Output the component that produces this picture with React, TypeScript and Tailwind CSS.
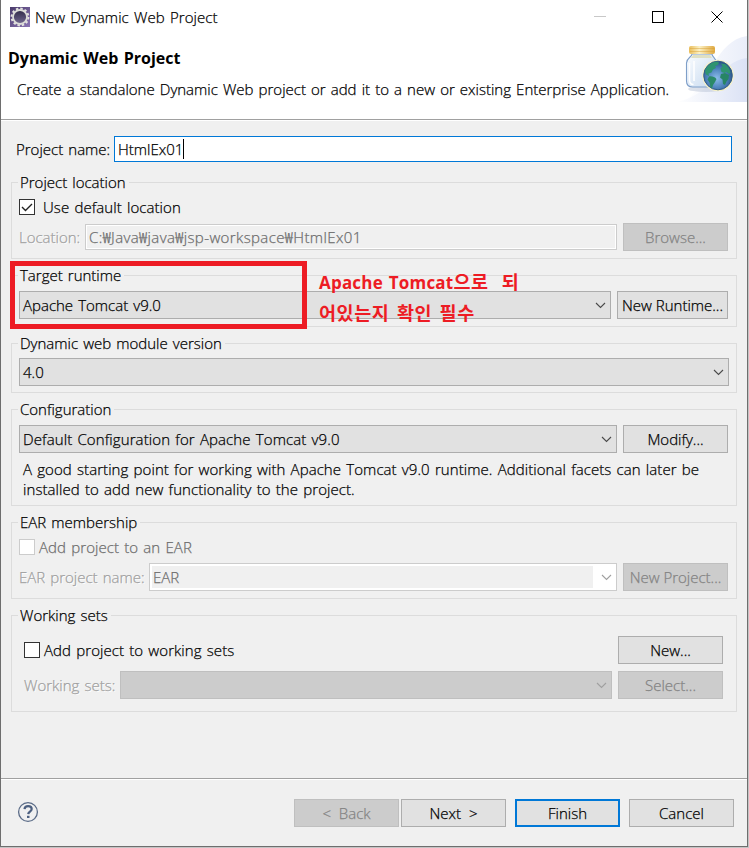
import type { ReactNode } from 'react';
import clsx from 'clsx';

/* --- Small building blocks --- */

function Chevron({ className = 'text-[#4a4a4a]' }: { className?: string }) {
  return (
    <svg width="11" height="7" viewBox="0 0 11 7" fill="none" className={clsx('shrink-0', className)}>
      <path d="M1 1l4.500 4.500L10 1" stroke="currentColor" strokeWidth="1.1" />
    </svg>
  );
}

function Group({ title, className, children }: { title: string; className?: string; children: ReactNode }) {
  return (
    <section className={clsx('ml-[10px] w-[726px] border border-[#dcdcdc]', className)}>
      <h2 className="-mt-[11px] ml-[6px] h-5 w-fit bg-[#f0f0f0] pl-[2px] pr-[3px] leading-5">{title}</h2>
      {children}
    </section>
  );
}

function Button({ children, disabled, primary, className = 'w-[105px]' }: { children: ReactNode; disabled?: boolean; primary?: boolean; className?: string }) {
  return (
    <button
      disabled={disabled}
      className={clsx(
        'flex h-7 shrink-0 items-center justify-center whitespace-pre',
        className,
        disabled && 'border border-[#bfbfbf] bg-[#cccccc] text-[#838383]',
        primary && 'border-2 border-[#0078d7] bg-[#e1e1e1]',
        !disabled && !primary && 'border border-[#adadad] bg-[#e1e1e1]',
      )}
    >
      {children}
    </button>
  );
}

function Combo({ children, disabled, className }: { children?: ReactNode; disabled?: boolean; className?: string }) {
  return (
    <div
      className={clsx(
        'flex h-7 shrink-0 items-center justify-between border pl-[3px] pr-[4px]',
        disabled ? 'border-[#bfbfbf] bg-[#cccccc]' : 'border-[#adadad] bg-[#e1e1e1]',
        className,
      )}
    >
      <span>{children}</span>
      <Chevron className={disabled ? 'text-[#a0a0a0]' : 'text-[#4a4a4a]'} />
    </div>
  );
}

function Checkbox({ checked, disabled }: { checked?: boolean; disabled?: boolean }) {
  return (
    <span className={clsx('flex size-4 shrink-0 items-center justify-center border bg-white', disabled ? 'border-[#cccccc]' : 'border-[#333333]')}>
      {checked && (
        <svg width="14" height="14" viewBox="0 0 14 14" fill="none">
          <path d="M2 7l3.500 3.500L12 4" stroke="#222" strokeWidth="1.4" />
        </svg>
      )}
    </span>
  );
}

/* --- Icons --- */

function EclipseIcon() {
  return (
    <svg width="20" height="20" viewBox="0 0 20 20">
      <defs>
        <linearGradient id="ecl" x1="0" y1="0" x2="1" y2="1">
          <stop offset="0" stopColor="#4a3b6b" />
          <stop offset="1" stopColor="#8b75b4" />
        </linearGradient>
        <linearGradient id="disc" x1="0" y1="0" x2="0" y2="1">
          <stop offset="0" stopColor="#2f2947" />
          <stop offset="1" stopColor="#736991" />
        </linearGradient>
      </defs>
      <rect width="20" height="20" fill="url(#ecl)" />
      <circle cx="10" cy="10" r="8.4" fill="none" stroke="#e4e4e0" strokeWidth="2" strokeDasharray="2.4 2" />
      <circle cx="10" cy="10" r="7" fill="url(#disc)" stroke="#dcdcd8" strokeWidth="1.8" />
    </svg>
  );
}

function JarIcon() {
  return (
    <svg width="75" height="66" viewBox="0 0 75 66" className="shrink-0">
      <defs>
        <linearGradient id="swoosh" x1="0" y1="0" x2="1" y2="0">
          <stop offset="0" stopColor="#ffffff" />
          <stop offset="1" stopColor="#dbe2f5" />
        </linearGradient>
        <linearGradient id="glass" x1="0" y1="0" x2="1" y2="1">
          <stop offset="0" stopColor="#fbfdff" />
          <stop offset="1" stopColor="#c6d9ef" />
        </linearGradient>
        <linearGradient id="lid" x1="0" y1="0" x2="1" y2="0">
          <stop offset="0" stopColor="#e9bd5a" />
          <stop offset="0.4" stopColor="#fcf1c5" />
          <stop offset="1" stopColor="#dfa83f" />
        </linearGradient>
        <radialGradient id="sea" cx="0.45" cy="0.6" r="0.6">
          <stop offset="0" stopColor="#8cbdea" />
          <stop offset="0.6" stopColor="#4a80b9" />
          <stop offset="1" stopColor="#275085" />
        </radialGradient>
      </defs>
      <path d="M12 66C36 50 44 4 75 0v66z" fill="url(#swoosh)" opacity="0.6" />
      <path d="M4 66C40 60 46 26 75 22v44z" fill="url(#swoosh)" />
      <ellipse cx="34" cy="53" rx="18" ry="3" fill="#b9c4d6" opacity="0.5" />
      <path d="M20 18c0 3-5.500 4-5.500 9v18c0 4 2 6 6 6h18c4 0 6-2 6-6V27c0-5-4.500-6-4.500-9z" fill="url(#glass)" stroke="#7f9fc9" strokeWidth="1.1" />
      <path d="M17.500 27v17c0 3 1 4.500 4 4.500M22 25v20" fill="none" stroke="#ffffff" strokeWidth="1.5" />
      <path d="M21 19h17l2 3H19z" fill="#dfe0c4" />
      <rect x="17" y="10" width="26" height="8" rx="2" fill="url(#lid)" />
      <path d="M18 12.500h24M18 15.500h24" stroke="#d79f34" strokeWidth="0.7" opacity="0.65" />
      <circle cx="46" cy="39.500" r="15.800" fill="#f6f1c8" />
      <circle cx="46" cy="39.500" r="14.300" fill="url(#sea)" stroke="#315b86" strokeWidth="1" />
      {/* Americas on the left, Africa on the right */}
      <path d="M35 31c2-3 6-5 9-5.500l3 1-1 2.500-3 1 1 2-3 1.500-1.500 3-3 1 .5 2.500-3-1.500c-1.500-3-1-5 1-7.500z" fill="#2f9470" />
      <path d="M37 40.500c3-.5 6 .5 7.500 2.500l-1.500 3-2 3-1 3.500-1.500-1-1-5-2-3z" fill="#2b8a68" />
      <path d="M49 27.500l4 .5c3 2 5 5 5.500 9l-1.500 1-2.500-2-2 1-3-1-1-3.500 2-2z" fill="#2f9470" />
      <path d="M49 38l4-1 4 2-.5 4-2 2.500-1.500 3.500-2-1-.5-4.500-2.500-2z" fill="#278565" />
    </svg>
  );
}

export default function App() {
  return (
    <div className="flex h-[848px] w-[749px] overflow-hidden bg-[#c4c4c4] font-['Open_Sans','Noto_Sans_CJK_KR',sans-serif] text-[15px] font-light leading-5 text-black [-webkit-text-stroke:0.25px] [word-spacing:1.2px]">
      <div className="flex h-[847px] w-[748px] flex-col border-x border-b border-[#6e6e6e] bg-[#f0f0f0]">

        {/* Title bar and banner */}
        <header className="flex h-[120px] shrink-0 flex-col border-b border-[#a0a0a0] bg-white">
          <div className="flex h-[36px] shrink-0 items-center pb-[2px] pl-[9px]">
            <EclipseIcon />
            <span className="ml-[5px] tracking-[0.07px]">New Dynamic Web Project</span>
            <svg width="130" height="12" viewBox="0 0 130 12" fill="none" className="ml-auto mr-[23px]" shapeRendering="crispEdges">
              <path d="M0 5.500h12" stroke="#c8c8c8" />
              <rect x="58.500" y="0.500" width="11" height="11" stroke="#000" />
              <path d="M117.500 0.500l11 11M128.500 0.500l-11 11" stroke="#000" shapeRendering="auto" />
            </svg>
          </div>
          <div className="flex">
            <div className="w-[671px] shrink-0 pl-[7px] pt-[12px]">
              <h1 className="text-[16px] font-bold [-webkit-text-stroke:0]">Dynamic Web Project</h1>
              <p className="ml-[9px] mt-[11px] whitespace-nowrap">
                Create a standalone Dynamic Web project or add it to a new or existing Enterprise Application.
              </p>
            </div>
            <JarIcon />
          </div>
        </header>

        <main className="h-[658px] shrink-0 border-t border-white">
          <div className="mt-[15px] flex h-[26px] items-center pl-[15px]">
            <label className="w-[98px]">Project name:</label>
            <div className="flex h-[26px] w-[618px] items-center border border-[#0078d7] bg-white pl-[3px]">
              HtmlEx01
              <span className="h-5 w-px bg-black" />
            </div>
          </div>

          <Group title="Project location" className="mt-[20px] h-[77px]">
            <div className="ml-[7px] mt-[7px] flex h-4 items-center gap-[8px]">
              <Checkbox checked />
              <span className="tracking-[0.07px]">Use default location</span>
            </div>
            <div className="ml-[7px] mt-[8px] flex h-7 items-center">
              <span className="w-[66px] text-[#a0a0a0] [text-shadow:1px_1px_0_#fff]">Location:</span>
              <div className="mr-[6px] flex h-[26px] w-[532px] items-center border border-[#cccccc] pl-[3px] tracking-[0.39px] text-[#6d6d6d] shadow-[inset_0_0_0_1px_#fff]">
                C:₩Java₩java₩jsp-workspace₩HtmlEx01
              </div>
              <Button disabled>Browse...</Button>
            </div>
          </Group>

          {/* Target runtime carries the red annotation */}
          <div className="relative mt-[16px]">
            <Group title="Target runtime" className="h-[52px]">
              <div className="ml-[7px] mt-[6px] flex gap-[6px]">
                <Combo className="w-[592px]">Apache Tomcat v9.0</Combo>
                <Button className="w-[111px]">New Runtime...</Button>
              </div>
            </Group>
            <div className="absolute -top-[14px] left-[9px] h-[68px] w-[297px] border-[5px] border-[#ed1c24]" />
            <div className="absolute -top-[9px] left-[318px] whitespace-pre text-[18.5px] font-bold leading-[31px] tracking-[0.6px] text-[#ed1c24] [-webkit-text-stroke:0]">
              <div className="flex h-[31px] items-baseline">
                <span className="text-[17px] tracking-[0.2px]">Apache Tomcat</span>
                <span>{'으로  되'}</span>
              </div>
              <p className="[word-spacing:2px]">어있는지 확인 필수</p>
            </div>
          </div>

          <Group title="Dynamic web module version" className="mt-[16px] h-[50px]">
            <div className="ml-[7px] mt-[5px]">
              <Combo className="w-[710px]">4.0</Combo>
            </div>
          </Group>

          <Group title="Configuration" className="mt-[16px] h-[97px]">
            <div className="ml-[7px] mt-[6px] flex gap-[6px]">
              <Combo className="w-[598px] tracking-[0.1px]">Default Configuration for Apache Tomcat v9.0</Combo>
              <Button>Modify...</Button>
            </div>
            <p className="ml-[11px] mt-[6px] whitespace-nowrap tracking-[0.07px]">
              A good starting point for working with Apache Tomcat v9.0 runtime. Additional facets can later be
              <br />
              installed to add new functionality to the project.
            </p>
          </Group>

          <Group title="EAR membership" className="mt-[16px] h-[77px]">
            <div className="ml-[7px] mt-[7px] flex h-4 items-center gap-[4px] text-[#6d6d6d]">
              <Checkbox disabled />
              <span className="tracking-[0.07px]">Add project to an EAR</span>
            </div>
            <div className="ml-[7px] mt-[8px] flex h-7 items-center">
              <span className="w-[130px] text-[#a0a0a0] [text-shadow:1px_1px_0_#fff]">EAR project name:</span>
              <div className="mr-[6px] flex h-7 w-[468px] items-center justify-between border border-[#cccccc] bg-white pl-[2px] pr-[4px] text-[#6d6d6d]">
                <span className="h-[22px] w-[441px] bg-[#f0f0f0] pl-px leading-[22px]">EAR</span>
                <Chevron className="text-[#a0a0a0]" />
              </div>
              <Button disabled>New Project...</Button>
            </div>
          </Group>

          <Group title="Working sets" className="mt-[16px] h-[97px]">
            <div className="ml-[12px] mt-[11px] flex h-7 items-center gap-[4px]">
              <Checkbox />
              <span className="tracking-[0.07px]">Add project to working sets</span>
              <div className="ml-auto mr-[13px]">
                <Button>New...</Button>
              </div>
            </div>
            <div className="ml-[12px] mt-[7px] flex h-7 items-center">
              <span className="w-[96px] text-[#a0a0a0] [text-shadow:1px_1px_0_#fff]">Working sets:</span>
              <Combo disabled className="mr-[6px] w-[492px]" />
              <Button disabled>Select...</Button>
            </div>
          </Group>
        </main>

        <footer className="flex h-[68px] shrink-0 items-center border-t border-[#a0a0a0] pl-[16px] shadow-[inset_0_1px_0_#fff]">
          <svg width="22" height="22" viewBox="0 0 22 22" fill="none" className="mb-[2px]">
            <circle cx="11" cy="11" r="9.400" stroke="#5a6b87" strokeWidth="1.300" />
            <path d="M7.500 8.200c.2-2 1.600-3 3.600-3 2.200 0 3.600 1.100 3.600 2.900 0 2.500-3.300 2.500-3.500 5" stroke="#4d6080" strokeWidth="2.200" />
            <path d="M10 14.800h2.500v2.200H10z" fill="#4d6080" />
          </svg>
          <div className="ml-auto mr-[13px] flex">
            <Button disabled>{'<  Back'}</Button>
            <Button className="ml-[2px] w-[105px]">{'Next  >'}</Button>
            <Button primary className="ml-[9px] w-[105px]">Finish</Button>
            <Button className="ml-[9px] w-[105px]">Cancel</Button>
          </div>
        </footer>
      </div>
    </div>
  );
}
